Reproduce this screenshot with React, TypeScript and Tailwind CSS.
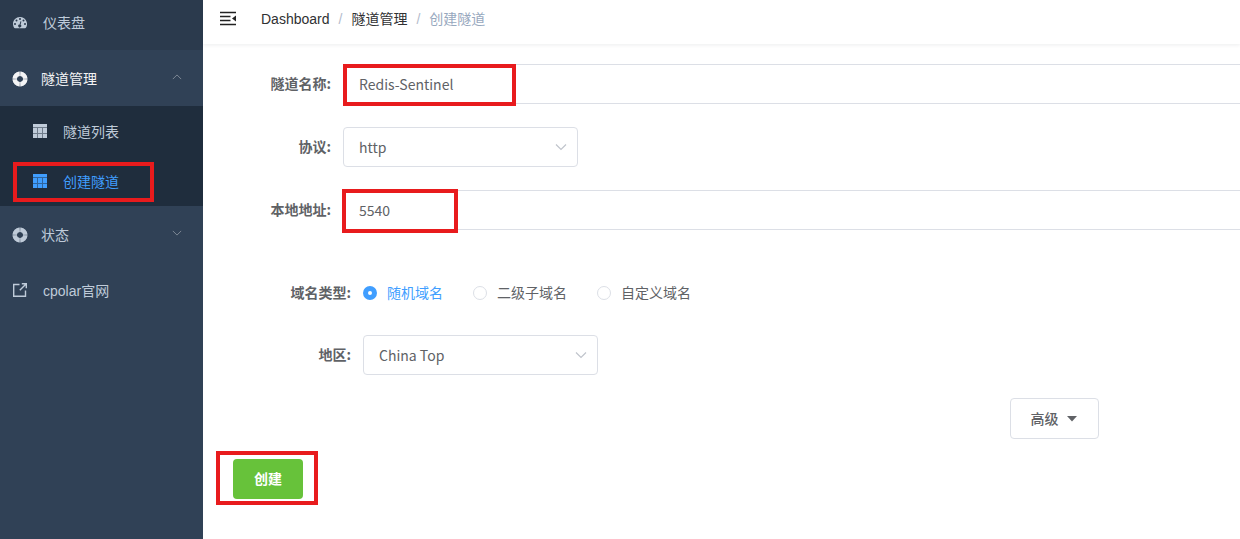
import { useState } from "react";
import type { ReactNode } from "react";

function DashboardIcon() {
  return (
    <svg viewBox="0 0 28 24" className="h-3 w-3.5 shrink-0" fill="currentColor">
      <path
        fillRule="evenodd"
        d="M14 0C6.3 0 0 6.300 0 14c0 2.700.8 5.300 2.200 7.500.4.600 1 1 1.700 1h20.200c.7 0 1.300-.4 1.700-1A14 14 0 0 0 14 0ZM4 16a2 2 0 1 1 0-4 2 2 0 0 1 0 4Zm3-7a2 2 0 1 1 0-4 2 2 0 0 1 0 4Zm7-3a2 2 0 1 1 0-4 2 2 0 0 1 0 4Zm2.700 3.400-1.600 6a3 3 0 1 1-1.900-.5l1.600-6a1 1 0 0 1 1.900.5ZM21 9a2 2 0 1 1 0-4 2 2 0 0 1 0 4Zm3 7a2 2 0 1 1 0-4 2 2 0 0 1 0 4Z"
      />
    </svg>
  );
}

function RingIcon() {
  return (
    <svg viewBox="0 0 16 16" className="size-4 shrink-0" fill="none" stroke="currentColor" strokeWidth="4.400">
      <path d="M8.400 2.700A5.300 5.300 0 0 1 13.300 7.600M13.300 8.400A5.300 5.300 0 0 1 8.400 13.300M7.600 13.300A5.300 5.300 0 0 1 2.700 8.400M2.700 7.600A5.300 5.300 0 0 1 7.600 2.700" />
      <circle cx="8" cy="8" r="5.300" strokeOpacity="0.5" />
    </svg>
  );
}

function TableIcon() {
  return (
    <svg viewBox="0 0 14 14" className="mb-0.5 size-3.5 shrink-0" fill="currentColor">
      <path d="M0 0h14v3H0zM0 4h4v5H0zM5 4h4v5H5zM10 4h4v5h-4zM0 10h4v4H0zM5 10h4v4H5zM10 10h4v4h-4z" />
      <path d="M0 3h14v1H0zM4 4h1v10H4zM9 4h1v10H9zM0 9h14v1H0z" opacity="0.5" />
    </svg>
  );
}

function LinkIcon() {
  return (
    <svg viewBox="0 0 14 14" className="mb-0.5 size-3.5 shrink-0" fill="none" stroke="currentColor" strokeWidth="1.400">
      <path d="M6.500 1.500H.7v11.800h11.800V7.500M8.800.7h4.500v4.500M13 1 6.800 7.200" />
    </svg>
  );
}

function Chevron({ className }: { className: string }) {
  return (
    <svg viewBox="0 0 12 12" className={className} fill="none" stroke="currentColor" strokeWidth="1.200">
      <path d="m1 3.500 5 5 5-5" />
    </svg>
  );
}

function Mark({ className }: { className: string }) {
  return <span className={`pointer-events-none absolute border-4 border-[#e81b1d] ${className}`} />;
}

function Sidebar() {
  return (
    <nav className="w-[203px] shrink-0 bg-[#304156] text-sm text-[#bfcbd9]">
      <a href="#dashboard" className="flex h-[50px] items-center gap-4 bg-[#2b3a4d] pb-1 pl-[13px]">
        <DashboardIcon />
        仪表盘
      </a>
      <button type="button" className="flex h-14 w-full items-center gap-[13px] pt-0.5 pr-[21px] pl-3 text-[#f4f4f5]">
        <RingIcon />
        隧道管理
        <Chevron className="mb-1 ml-auto size-2.5 rotate-180 text-[#7d8794]" />
      </button>
      <div className="bg-[#1f2d3d]">
        <a href="#list" className="flex h-[50px] items-center gap-4 pt-0.5 pl-[33px]">
          <TableIcon />
          隧道列表
        </a>
        <a href="#create" className="relative flex h-[50px] items-center gap-4 pt-0.5 pl-[33px] text-[#409eff]">
          <TableIcon />
          创建隧道
          <Mark className="top-1.5 left-[13px] h-10 w-[141px]" />
        </a>
      </div>
      <button type="button" className="flex h-14 w-full items-center gap-[13px] pt-0.5 pr-[21px] pl-3">
        <RingIcon />
        状态
        <Chevron className="mb-1 ml-auto size-2.5 text-[#7d8794]" />
      </button>
      <a href="#official" className="flex h-14 items-center gap-4 pt-0.5 pl-[13px]">
        <LinkIcon />
        cpolar官网
      </a>
    </nav>
  );
}

function Header() {
  return (
    <header className="flex h-11 items-center pb-1.5 pl-4 text-sm shadow-[0_1px_4px_rgba(0,21,41,0.08)]">
      <button type="button" aria-label="Toggle" className="mr-6">
        <svg viewBox="0 0 18 16" className="h-4 w-[18px]" fill="none" stroke="#222" strokeWidth="1.500">
          <path d="M1 1.500h16M1 5.500h10.500M1 9.500h10.500M1 13.500h16" />
          <path d="m17 4.500-4 3 4 3Z" fill="#222" stroke="none" />
        </svg>
      </button>
      <ol className="flex gap-[9px] text-[#303133]">
        <li><a href="#dashboard">Dashboard</a></li>
        <li className="text-[#b4bccc]">/</li>
        <li><a href="#tunnels">隧道管理</a></li>
        <li className="text-[#b4bccc]">/</li>
        <li className="text-[#97a8be]">创建隧道</li>
      </ol>
    </header>
  );
}

const field =
  "h-10 border border-[#dcdfe6] bg-white px-[15px] font-['Noto_Sans_CJK_SC','Noto_Sans',sans-serif] text-sm text-[#606266] outline-none";

const labelStyle = "mr-3 shrink-0 pb-0.5 text-right font-['Noto_Sans_CJK_SC',sans-serif] font-bold";

function Label({ htmlFor, wide, children }: { htmlFor: string; wide?: boolean; children: ReactNode }) {
  return (
    <label htmlFor={htmlFor} className={`${wide ? "w-[148px]" : "w-32"} ${labelStyle}`}>
      {children}
    </label>
  );
}

function Select({ id, value }: { id: string; value: string }) {
  return (
    <div className="relative w-[235px]">
      <select id={id} className={`${field} w-full appearance-none rounded`}>
        <option>{value}</option>
      </select>
      <Chevron className="pointer-events-none absolute top-3.5 right-[11px] size-3 text-[#c0c4cc]" />
    </div>
  );
}

const domainTypes = ["随机域名", "二级子域名", "自定义域名"];

export default function App() {
  const [domain, setDomain] = useState(domainTypes[0]);
  return (
    <div className="flex min-h-screen bg-white font-['Liberation_Sans','Noto_Sans_CJK_SC',sans-serif]">
      <Sidebar />
      <div className="min-w-0 flex-1">
        <Header />
        <form className="flex flex-col pt-5 text-sm text-[#606266]">
          <div className="mb-[23px] flex items-center">
            <Label htmlFor="name">隧道名称:</Label>
            <div className="relative flex-1">
              <input id="name" defaultValue="Redis-Sentinel" className={`${field} block w-full rounded-l border-r-0`} />
              <Mark className="top-0 left-0 h-[42px] w-[173px]" />
            </div>
          </div>
          <div className="mb-[23px] flex items-center">
            <Label htmlFor="protocol">协议:</Label>
            <Select id="protocol" value="http" />
          </div>
          <div className="flex items-center">
            <Label htmlFor="address">本地地址:</Label>
            <div className="relative flex-1">
              <input id="address" defaultValue="5540" className={`${field} block w-full rounded-l border-r-0`} />
              <Mark className="-top-px -left-px h-11 w-[116px]" />
            </div>
          </div>
          <div
            role="radiogroup"
            aria-labelledby="domain-label"
            className="mt-[43px] mb-[22px] flex h-10 items-center"
          >
            <span id="domain-label" className={`w-[148px] ${labelStyle}`}>域名类型:</span>
            <div className="flex gap-[30px]">
              {domainTypes.map((type) => (
                <label key={type} className={`flex items-center gap-2.5 ${type === domain ? "text-[#409eff]" : ""}`}>
                  <input
                    type="radio"
                    name="domain"
                    checked={type === domain}
                    onChange={() => setDomain(type)}
                    className="size-3.5 appearance-none rounded-full border border-[#dcdfe6] checked:border-[5px] checked:border-[#409eff]"
                  />
                  {type}
                </label>
              ))}
            </div>
          </div>
          <div className="flex items-center">
            <Label htmlFor="region" wide>地区:</Label>
            <Select id="region" value="China Top" />
          </div>
          <button
            type="button"
            className="mt-[23px] mr-[141px] flex h-[41px] w-[89px] items-center justify-center gap-2 self-end rounded border border-[#dcdfe6] pr-0.5 font-medium"
          >
            高级
            <svg viewBox="0 0 10 6" className="h-1.5 w-2.5" fill="currentColor">
              <path d="M0 0h10L5 5.500Z" />
            </svg>
          </button>
          <div className="relative mt-5 ml-[30px] w-[70px]">
            <button type="submit" className="h-10 w-full rounded bg-[#67c23a] font-bold text-white">
              创建
            </button>
            <Mark className="-top-2 -left-[17px] h-[54px] w-[102px]" />
          </div>
        </form>
      </div>
    </div>
  );
}
